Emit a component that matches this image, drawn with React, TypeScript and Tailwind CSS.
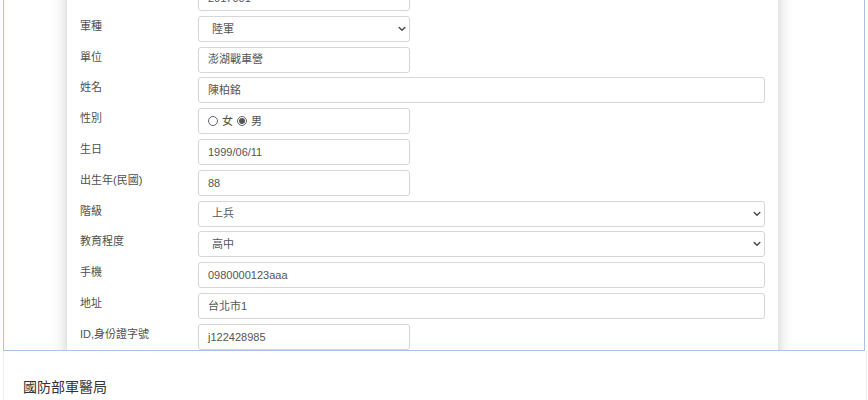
import React from "react";

const Chevron = () => (
  <svg width="8" height="6" viewBox="0 0 8 6" className="shrink-0">
    <path d="M1.2 1.5 L4 4.2 L6.8 1.5" fill="none" stroke="#4a4a4a" strokeWidth="1.5" strokeLinecap="round" strokeLinejoin="round" />
  </svg>
);

type Row = { label: string; value?: string; wide?: boolean; select?: boolean; radio?: boolean };

const rows: Row[] = [
  { label: "兵籍號碼", value: "2017001" },
  { label: "軍種", value: "陸軍", select: true },
  { label: "單位", value: "澎湖戰車營" },
  { label: "姓名", value: "陳柏銘", wide: true },
  { label: "性別", radio: true },
  { label: "生日", value: "1999/06/11" },
  { label: "出生年(民國)", value: "88" },
  { label: "階級", value: "上兵", wide: true, select: true },
  { label: "教育程度", value: "高中", wide: true, select: true },
  { label: "手機", value: "0980000123aaa", wide: true },
  { label: "地址", value: "台北市1", wide: true },
  { label: "ID,身份證字號", value: "j122428985" },
];

const Radio = ({ checked }: { checked?: boolean }) => (
  <span className="w-[10px] h-[10px] rounded-full border border-[#666] bg-white flex items-center justify-center shrink-0">
    {checked && <span className="w-[6px] h-[6px] rounded-full bg-[#555]" />}
  </span>
);

export default function App() {
  return (
    <div className="w-[868px] h-[400px] bg-white overflow-hidden font-['Liberation_Sans','Noto_Sans_CJK_TC',sans-serif]">
      <div className="ml-[3px] w-[862px] h-[351px] border-x border-b border-[#a9c4e8] overflow-hidden bg-white">
        <div className="ml-[63px] w-[711px] -mt-[15px] pb-[40px] bg-white shadow-[0_0_14px_rgba(0,0,0,0.22)] flex flex-col gap-[4.8px]">
          {rows.map((r) => (
            <div key={r.label} className="flex">
              <div className="w-[131px] pl-[13px] pt-[2px] text-[11px] leading-[16px] text-[#505050] shrink-0">
                {r.label}
              </div>
              <div
                className={`${r.wide ? "w-[567px]" : "w-[212px]"} h-[26px] border border-[#d6d6d6] rounded-[3px] bg-white flex items-center text-[11px] text-[#555] ${
                  r.select ? "pl-[13px] pr-[3px] justify-between" : "pl-[9px]"
                }`}
              >
                {r.radio ? (
                  <div className="flex items-center gap-[4px] text-[#505050]">
                    <Radio />
                    <span>女</span>
                    <Radio checked />
                    <span>男</span>
                  </div>
                ) : (
                  <span>{r.value}</span>
                )}
                {r.select && <Chevron />}
              </div>
            </div>
          ))}
        </div>
      </div>
      <div className="ml-[3px] w-[864px] h-[49px] border-x border-[#eeeeee] pl-[19px] pt-[27px] text-[14px] leading-[18px] text-[#333]">
        國防部軍醫局
      </div>
    </div>
  );
}
